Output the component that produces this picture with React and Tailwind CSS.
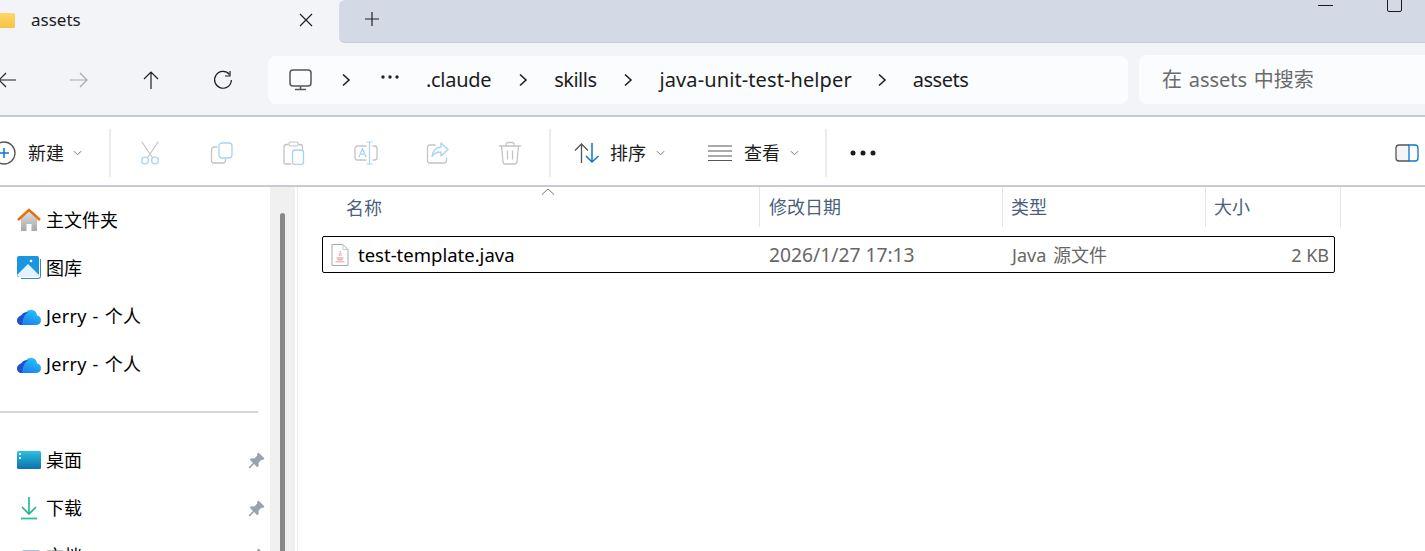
import React from "react";

const FONT = "font-['Noto_Sans','Noto_Sans_CJK_SC',sans-serif]";

// Shared line icon wrapper, draws on a 24 grid
const Icon = ({ children, className = "w-6 h-6" }) => (
  <svg viewBox="0 0 24 24" fill="none" strokeLinecap="round" strokeLinejoin="round" className={className}>
    {children}
  </svg>
);

const Chevron = () => (
  <svg viewBox="0 0 10 14" className="w-[10px] h-[14px]" fill="none">
    <path d="M2 1.5 8 7l-6 5.5" stroke="#1f1f1f" strokeWidth="1.6" />
  </svg>
);

const SmallCaret = () => (
  <svg viewBox="0 0 10 6" className="w-[9px] h-[6px]" fill="none">
    <path d="M1 1l4 4 4-4" stroke="#666" strokeWidth="1" />
  </svg>
);

const Crumb = ({ children, className = "" }) => (
  <span className={`text-[20px] leading-none text-[#1c1c1c] ${className}`}>{children}</span>
);

const Sep = () => <div className="w-[2px] h-[48px] bg-[#ececec] shrink-0" />;

const ToolIcon = ({ children }) => (
  <div className="w-[72px] flex items-center justify-center shrink-0">{children}</div>
);

const GREY = "#c4c4c4";
const BLUE = "#a9d2f3";

const Pin = () => (
  <svg viewBox="0 0 17 17" className="w-[17px] h-[17px] shrink-0">
    <path d="M10.500 0.500 16.500 6.500 15 8l-1.500-.3-3 3 .2 3-1.500 1.500L6 12l-4.200 4.500-1.300-1.300L5 11 1.800 7.800 3.300 6.300l3 .2 3-3L9 2z" fill="#98a2ac" />
  </svg>
);

const NavItem = ({ icon, label, pin, spaced }) => (
  <div className="h-12 flex items-center pl-[17px] pr-[5px]">
    <div className="w-6 h-6 flex items-center justify-center shrink-0">{icon}</div>
    <span className={`ml-[5px] text-[18px] leading-none text-black flex-1 whitespace-nowrap ${spaced ? "tracking-[0.3px] [word-spacing:1px]" : ""}`}>
      {label}
    </span>
    {pin && <Pin />}
  </div>
);

const HomeIcon = (
  <svg viewBox="0 0 24 24" className="w-6 h-6">
    <defs>
      <linearGradient id="hg" x1="0" y1="0" x2="0" y2="1">
        <stop offset="0" stopColor="#dcdcdc" />
        <stop offset="1" stopColor="#a8a8a8" />
      </linearGradient>
    </defs>
    <path d="M4 11 12 4l8 7v12h-5.500v-7h-5v7H4z" fill="url(#hg)" />
    <path d="M1 12 12 2l11 10" fill="none" stroke="#e0730f" strokeWidth="2.600" />
  </svg>
);

const GalleryIcon = (
  <svg viewBox="0 0 24 24" className="w-6 h-6">
    <path d="M4 23h17a3 3 0 0 0 3-3V3h-1v17a2 2 0 0 1-2 2H4z" fill="#3f86c9" />
    <rect x="0" y="0" width="22" height="21" rx="2" fill="#1b95e0" />
    <path d="M0 19 11 8l11 11v1a1 1 0 0 1-1 1H2z" fill="#e3f3fd" />
    <circle cx="14" cy="5" r="1.300" fill="#fff" />
  </svg>
);

const CloudIcon = (
  <svg viewBox="0 0 24 17" className="w-6 h-[17px]">
    <defs>
      <linearGradient id="cg" x1="0.200" y1="1" x2="0.800" y2="0">
        <stop offset="0" stopColor="#1a7af0" />
        <stop offset="1" stopColor="#27c4f5" />
      </linearGradient>
    </defs>
    <path d="M4.500 17a4.500 4.500 0 0 1-.6-8.900A5.500 5.500 0 0 1 9 4.500 6 6 0 0 1 20 7.500 4.800 4.800 0 0 1 19.500 17z" fill="url(#cg)" />
    <path d="M0 12.500C1 8.500 3.500 7.500 5 7c1.500-2.500 4-3 6-2.500C8 6 6 10 5.500 14c-.2 1.500 0 2.500.5 3H4.500A4.500 4.500 0 0 1 0 12.500z" fill="#1d4fd0" />
  </svg>
);

const DesktopIcon = (
  <svg viewBox="0 0 24 18" className="w-6 h-[18px]">
    <defs>
      <linearGradient id="dg" x1="0" y1="0" x2="0" y2="1">
        <stop offset="0" stopColor="#2bc0e0" />
        <stop offset="1" stopColor="#0f6fb0" />
      </linearGradient>
    </defs>
    <rect width="24" height="18" rx="1.500" fill="url(#dg)" />
    <rect x="2" y="2" width="2" height="2" fill="#e8fbff" />
    <rect x="2" y="6" width="2" height="2" fill="#e8fbff" />
  </svg>
);

const DownloadIcon = (
  <svg viewBox="0 0 24 24" className="w-6 h-6" fill="none">
    <path d="M12 1v17M5 11l7 7 7-7" stroke="#20b58e" strokeWidth="1.600" />
    <path d="M4 22.500h16" stroke="#2bbf9a" strokeWidth="1.800" />
  </svg>
);

const DocsIcon = <div className="w-[18px] h-6 mt-3 rounded-t-[2px] bg-gradient-to-b from-[#a9bbd3] to-[#8fa5c2] ml-[3px]" />;

const FileIcon = () => (
  <svg viewBox="0 0 18 22" className="w-[18px] h-[22px]" fill="none">
    <path d="M1 .5h11L17 5.500v16H1z" fill="#fff" stroke="#a8a8a8" />
    <path d="M12 .5v5h5" stroke="#c8c8c8" />
    <path d="M9 7c1.500 2-2 3-.5 5M10.500 9c-1.200 1-1 2 0 3" stroke="#e58a8a" strokeWidth=".8" />
    <path d="M5.500 14h7M6.500 15.800h5" stroke="#e58a8a" />
    <path d="M4.500 17.800h9" stroke="#ee9a9a" />
  </svg>
);

const App = () => {
  return (
    <div className={`w-[1425px] h-[551px] overflow-hidden bg-white flex flex-col ${FONT}`}>
      {/* TAB STRIP */}
      <div className="h-[43px] shrink-0 flex bg-[#f3f4f8]">
        <div className="w-[339px] h-[43px] flex items-center shrink-0 overflow-hidden">
          <div className="w-[26px] h-[15px] -ml-[11px] -mt-[3px] rounded-[2px] bg-gradient-to-b from-[#ffd76a] to-[#f7c244] shrink-0" />
          <span className="ml-4 -mt-[4px] text-[17px] leading-none text-[#1c1c1c]">assets</span>
          <svg viewBox="0 0 14 14" className="w-[14px] h-[14px] ml-[218px] -mt-[3px]" fill="none">
            <path d="M1 1l12 12M13 1 1 13" stroke="#222" strokeWidth="1.200" />
          </svg>
        </div>
        <div className="flex-1 flex bg-[#d4d9e6] border-b border-[#c6cbd9] rounded-l-[6px]">
          <svg viewBox="0 0 16 16" className="w-4 h-4 ml-[25px] mt-[11px]" fill="none">
            <path d="M8 1v14M1 8h14" stroke="#222" strokeWidth="1.200" />
          </svg>
          <div className="flex-1" />
          <div className="w-[15px] h-px bg-[#1a1a1a] mt-[5px]" />
          <div className="w-[15px] h-[24px] -mt-3 ml-[54px] mr-[23px] rounded-[2px] border border-[#1a1a1a]" />
        </div>
      </div>

      {/* NAV + ADDRESS ROW */}
      <div className="h-[74px] shrink-0 bg-[#f3f4f8] border-b-2 border-[#c5cad6] flex items-center">
        <div className="flex -ml-[29px] mr-[9px] mt-[1px] shrink-0">
          <ToolIcon>
            <svg viewBox="0 0 20 18" className="w-5 h-[18px]" fill="none">
              <path d="M19 9H2M9 2 2 9l7 7" stroke="#1f1f1f" strokeWidth="1.200" />
            </svg>
          </ToolIcon>
          <ToolIcon>
            <svg viewBox="0 0 20 18" className="w-5 h-[18px]" fill="none">
              <path d="M1 9h17M11 2l7 7-7 7" stroke="#aaa" strokeWidth="1.200" />
            </svg>
          </ToolIcon>
          <ToolIcon>
            <svg viewBox="0 0 18 20" className="w-[18px] h-5" fill="none">
              <path d="M9 19V2M2 9l7-7 7 7" stroke="#1f1f1f" strokeWidth="1.200" />
            </svg>
          </ToolIcon>
          <ToolIcon>
            <svg viewBox="0 0 20 20" className="w-5 h-5" fill="none">
              <path d="M16.500 4.500A8.400 8.400 0 1 0 18.400 10" stroke="#1f1f1f" strokeWidth="1.200" />
              <path d="M17 1v5h-5" stroke="#1f1f1f" strokeWidth="1.200" />
            </svg>
          </ToolIcon>
        </div>

        <div className="w-[860px] h-[48px] mt-[2px] bg-[#fbfcfe] rounded-[8px] flex items-center pl-[21px] shrink-0">
          <svg viewBox="0 0 24 22" className="w-6 h-[22px] shrink-0" fill="none">
            <rect x="1" y="1" width="21" height="16" rx="3" stroke="#555" strokeWidth="1.500" />
            <path d="M11.500 17v3M6 20.500h11" stroke="#555" strokeWidth="1.500" />
          </svg>
          <div className="w-[66px] flex justify-center shrink-0"><Chevron /></div>
          <svg viewBox="0 0 18 4" className="w-[18px] h-1 ml-[2px] -mt-[7px] shrink-0">
            <circle cx="2" cy="2" r="1.700" fill="#222" />
            <circle cx="9" cy="2" r="1.700" fill="#222" />
            <circle cx="16" cy="2" r="1.700" fill="#222" />
          </svg>
          <div className="w-[27px] shrink-0" />
          <Crumb className="tracking-[-0.3px]">.claude</Crumb>
          <div className="w-[63px] flex justify-center shrink-0"><Chevron /></div>
          <Crumb className="tracking-[-0.5px]">skills</Crumb>
          <div className="w-[63px] flex justify-center shrink-0"><Chevron /></div>
          <Crumb className="tracking-[0.1px]">java-unit-test-helper</Crumb>
          <div className="w-[61px] flex justify-center shrink-0"><Chevron /></div>
          <Crumb className="tracking-[-0.5px]">assets</Crumb>
        </div>

        <div className="ml-[11px] w-[300px] h-[49px] mt-[1px] bg-[#fbfcfe] rounded-l-[8px] flex items-center pl-[23px] shrink-0">
          <span className="text-[20px] leading-none text-[#6a6a6a] [word-spacing:1.5px]">在 assets 中搜索</span>
        </div>
      </div>

      {/* COMMAND BAR */}
      <div className="h-[70px] shrink-0 bg-white border-b-2 border-[#c5cad6] pt-1 flex items-center">
        <svg viewBox="0 0 24 24" className="w-6 h-6 -ml-2 shrink-0" fill="none">
          <circle cx="12" cy="12" r="11" stroke="#555" strokeWidth="1.300" />
          <path d="M12 7v10M7 12h10" stroke="#0a78d4" strokeWidth="1.500" />
        </svg>
        <span className="ml-3 text-[18px] leading-none text-[#1c1c1c]">新建</span>
        <div className="ml-[9px] w-[9px] flex"><SmallCaret /></div>
        <div className="w-[27px] shrink-0" />
        <Sep />
        <div className="flex ml-[3px] shrink-0">
          <ToolIcon>
            <Icon>
              <path d="M4 1l10 15M20 1 10 16" stroke={GREY} strokeWidth="1.200" />
              <circle cx="7" cy="19.500" r="3.300" stroke={BLUE} strokeWidth="1.300" />
              <circle cx="17" cy="19.500" r="3.300" stroke={BLUE} strokeWidth="1.300" />
            </Icon>
          </ToolIcon>
          <ToolIcon>
            <Icon>
              <path d="M7 6H4a2.500 2.500 0 0 0-2.500 2.500v11A2.500 2.500 0 0 0 4 22h9a2.500 2.500 0 0 0 2.500-2.500V18" stroke={GREY} strokeWidth="1.300" />
              <rect x="9" y="2" width="13" height="15" rx="3" stroke={BLUE} strokeWidth="1.300" />
            </Icon>
          </ToolIcon>
          <ToolIcon>
            <Icon>
              <path d="M6 3.500H4.500A2.500 2.500 0 0 0 2 6v15a2 2 0 0 0 2 2h5M17 3.500h1A2.500 2.500 0 0 1 20.500 6v2" stroke={GREY} strokeWidth="1.300" />
              <rect x="7" y="1" width="9" height="4" rx="1.500" stroke={GREY} strokeWidth="1.200" />
              <rect x="10.500" y="9" width="11" height="14.500" rx="2.500" stroke={BLUE} strokeWidth="1.300" />
            </Icon>
          </ToolIcon>
          <ToolIcon>
            <Icon>
              <path d="M12 5H3.500A2.500 2.500 0 0 0 1 7.500v9A2.500 2.500 0 0 0 3.500 19H12M19 5h1.500A2.500 2.500 0 0 1 23 7.500v9a2.500 2.500 0 0 1-2.500 2.500H19" stroke={GREY} strokeWidth="1.300" />
              <path d="M5 16l3.500-8.500L12 16M6.200 13.200h4.600M15.500 1v22M13 1h5M13 23h5" stroke={BLUE} strokeWidth="1.200" />
            </Icon>
          </ToolIcon>
          <ToolIcon>
            <Icon>
              <path d="M9 4H4A2.500 2.500 0 0 0 1.500 6.500v13A2.500 2.500 0 0 0 4 22h14a2.500 2.500 0 0 0 2.500-2.500V17" stroke={GREY} strokeWidth="1.300" />
              <path d="M15 2l7 6.500-7 6.500v-4C11 11 8 12 6 15.500 6.500 10 10 6.500 15 6z" stroke={BLUE} strokeWidth="1.300" />
            </Icon>
          </ToolIcon>
          <ToolIcon>
            <Icon>
              <path d="M1.500 5h21M8 5V3.500A2 2 0 0 1 10 1.500h4A2 2 0 0 1 16 3.500V5M3.500 5l1.500 15.500A2.500 2.500 0 0 0 7.500 23h9a2.500 2.500 0 0 0 2.500-2.500L20.500 5M9.500 10v8M14.500 10v8" stroke={GREY} strokeWidth="1.300" />
            </Icon>
          </ToolIcon>
        </div>
        <div className="w-[3px] shrink-0" />
        <Sep />
        <svg viewBox="0 0 26 22" className="w-[26px] h-[22px] ml-[23px] shrink-0" fill="none">
          <path d="M7.500 21V2M1 8.500l6.500-6.500L14 8.500" stroke="#555" strokeWidth="1.300" />
          <path d="M18 1v19M12 14l6 6 6.500-6" stroke="#0a78d4" strokeWidth="1.500" />
        </svg>
        <span className="ml-[10px] text-[18px] leading-none text-[#1c1c1c]">排序</span>
        <div className="ml-[10px] w-[9px] flex"><SmallCaret /></div>
        <svg viewBox="0 0 24 16" className="w-6 h-4 ml-[43px] shrink-0" fill="none">
          <path d="M0 1h24M0 6h24M0 11h24M0 15.500h24" stroke="#555" strokeWidth="1.200" />
        </svg>
        <span className="ml-3 text-[18px] leading-none text-[#1c1c1c]">查看</span>
        <div className="ml-[10px] w-[9px] flex"><SmallCaret /></div>
        <div className="w-[26px] shrink-0" />
        <Sep />
        <svg viewBox="0 0 26 6" className="w-[26px] h-[6px] ml-[23px] shrink-0">
          <circle cx="3" cy="3" r="2.500" fill="#1c1c1c" />
          <circle cx="13" cy="3" r="2.500" fill="#1c1c1c" />
          <circle cx="23" cy="3" r="2.500" fill="#1c1c1c" />
        </svg>
        <div className="flex-1" />
        <svg viewBox="0 0 24 18" className="w-6 h-[18px] mr-[6px] shrink-0" fill="none">
          <path d="M14 1H4a3 3 0 0 0-3 3v10a3 3 0 0 0 3 3h10" fill="#f4f5f6" stroke="#555" strokeWidth="1.300" />
          <path d="M14 1h6a3 3 0 0 1 3 3v10a3 3 0 0 1-3 3h-6z" stroke="#0a78d4" strokeWidth="1.300" />
        </svg>
      </div>

      {/* BODY */}
      <div className="flex-1 min-h-0 flex">
        {/* SIDEBAR */}
        <div className="w-[270px] shrink-0 pt-[9px] overflow-hidden">
          <NavItem icon={HomeIcon} label="主文件夹" />
          <NavItem icon={GalleryIcon} label="图库" />
          <NavItem icon={CloudIcon} label="Jerry - 个人" spaced />
          <NavItem icon={CloudIcon} label="Jerry - 个人" spaced />
          <div className="w-[258px] h-[2px] my-[23px] bg-[#d6d6d6]" />
          <NavItem icon={DesktopIcon} label="桌面" pin />
          <NavItem icon={DownloadIcon} label="下载" pin />
          <NavItem icon={DocsIcon} label="文档" pin />
        </div>

        {/* SCROLLBAR */}
        <div className="w-[25px] shrink-0 bg-[#f0f0f0] pt-[26px] pl-[10px]">
          <div className="w-[5px] h-[400px] rounded-t-full bg-[#888888]" />
        </div>
        <div className="w-[2px] shrink-0" />
        <div className="w-px shrink-0 bg-[#ececec]" />

        {/* FILE LIST */}
        <div className="flex-1 min-w-0 flex flex-col">
          <div className="h-[40px] shrink-0 flex text-[18px] leading-none text-[#4a5f7c]">
            <div className="w-[462px] shrink-0 border-r border-[#e5e5e5] flex flex-col pl-[48px]">
              <svg viewBox="0 0 14 7" className="w-[14px] h-[7px] ml-[195px] mt-[1px]" fill="none">
                <path d="M1 6.500 7 1l6 5.500" stroke="#777" strokeWidth="1" />
              </svg>
              <span className="mt-[4px]">名称</span>
            </div>
            <div className="w-[243px] shrink-0 border-r border-[#e5e5e5] pl-[9px] flex items-center">修改日期</div>
            <div className="w-[203px] shrink-0 border-r border-[#e5e5e5] pl-[8px] flex items-center">类型</div>
            <div className="w-[135px] shrink-0 border-r border-[#e5e5e5] pl-[8px] flex items-center">大小</div>
          </div>
          <div className="ml-[24px] mt-[9px] w-[1013px] h-[37px] border border-black rounded-[2px] flex items-center pt-px text-[18px] leading-none">
            <div className="ml-2 shrink-0"><FileIcon /></div>
            <span className="ml-[9px] w-[411px] shrink-0 text-[18.5px] text-black">test-template.java</span>
            <span className="w-[243px] shrink-0 text-[19.250px] text-[#666]">2026/1/27 17:13</span>
            <span className="flex-1 text-[#666] [word-spacing:2px]">Java 源文件</span>
            <span className="mr-[5px] text-[#666]">2 KB</span>
          </div>
        </div>
      </div>
    </div>
  );
};

export default App;
